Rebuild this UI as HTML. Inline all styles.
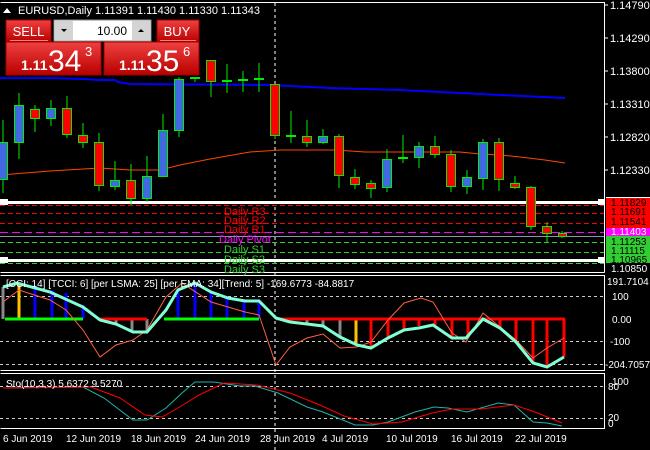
<!DOCTYPE html>
<html><head><meta charset="utf-8"><style>
html,body{margin:0;padding:0;background:#000;width:650px;height:450px;overflow:hidden}
svg{display:block;font-family:"Liberation Sans",sans-serif}
</style></head><body>
<svg width="650" height="450" viewBox="0 0 650 450" xmlns="http://www.w3.org/2000/svg">
<defs>
<linearGradient id="rg" x1="0" y1="0" x2="0" y2="1"><stop offset="0" stop-color="#f04040"/><stop offset="1" stop-color="#b80000"/></linearGradient>
</defs>
<rect width="650" height="450" fill="#000"/>
<!-- windows -->
<g fill="none" stroke="#fff" stroke-width="1">
<path d="M0.5 2.5H604.5V272.5"/>
<path d="M0.5 272.5H604.5M0.5 275.5H604.5V370.5H0.5"/>
<path d="M0.5 373.5H604.5V428.5H0.5"/>
</g>
<!-- main scale -->
<g fill="#fff" font-size="11">
<text x="610" y="9">1.14790</text><text x="610" y="42">1.14290</text><text x="610" y="75">1.13800</text>
<text x="610" y="108">1.13310</text><text x="610" y="141">1.12820</text><text x="610" y="174">1.12330</text>
</g>
<g stroke="#fff"><path d="M604 5h4M604 38h4M604 71h4M604 104h4M604 137h4M604 170h4"/></g>
<!-- MAs -->
<polyline fill="none" stroke="#0000ff" stroke-width="2" points="0,78 50,78 83,79 100,80 115,80 118,82 130,84 270,85 330,88 400,90 480,94 565,98"/>
<polyline fill="none" stroke="#ff4500" stroke-width="1" points="0,175 50,171 100,168 130,170 160,170 180,165 210,159 250,152 280,150 335,150 365,152 460,152 480,154 500,155 520,157 545,160 565,163"/>
<!-- vertical dashed -->
<path d="M275 3V450" stroke="#fff" stroke-dasharray="3,3"/>
<!-- levels -->
<rect x="0" y="201" width="604" height="3" fill="#fff"/>
<rect x="0" y="259" width="604" height="3" fill="#fff"/>
<g stroke-width="1">
<path d="M0 205.5H604" stroke="#ff0000" stroke-dasharray="5,3"/>
<path d="M0 213.5H604" stroke="#ff0000" stroke-dasharray="5,3"/>
<path d="M0 223.5H604" stroke="#ff0000" stroke-dasharray="5,3"/>
<path d="M0 232.5H604" stroke="#ff00ff" stroke-dasharray="8,4"/>
<path d="M0 236.5H604" stroke="#8899aa"/>
<path d="M0 242.5H604" stroke="#32cd32" stroke-dasharray="5,3"/>
<path d="M0 252.5H604" stroke="#32cd32" stroke-dasharray="5,3"/>
<path d="M0 263.5H604" stroke="#32cd32" stroke-dasharray="5,3"/>
</g>
<g font-size="11">
<text x="224" y="215" fill="#ff0000">Daily R3</text>
<text x="224" y="224" fill="#ff0000">Daily R2</text>
<text x="224" y="233" fill="#ff0000">Daily R1</text>
<text x="219" y="243" fill="#ff00ff">Daily Pivot</text>
<text x="224" y="253" fill="#32cd32">Daily S1</text>
<text x="224" y="263" fill="#32cd32">Daily S2</text>
<text x="224" y="273" fill="#32cd32">Daily S3</text>
</g>
<!-- right labels -->
<rect x="606" y="197" width="44" height="31" fill="#ff0000"/>
<rect x="606" y="228" width="44" height="8" fill="#ff00ff"/>
<rect x="606" y="236" width="44" height="27" fill="#32cd32"/>
<rect x="606" y="197" width="44" height="1" fill="#fff"/>
<g font-size="10" fill="#000">
<text x="611" y="206">1.11829</text><text x="611" y="215">1.11691</text><text x="611" y="225">1.11541</text>
<text x="611" y="235" fill="#fff">1.11403</text>
<text x="611" y="245">1.11253</text><text x="611" y="254">1.11115</text><text x="611" y="263">1.10965</text>
</g>
<text x="611" y="272" font-size="10" fill="#fff">1.10850</text>
<g fill="#fff"><rect x="598" y="199" width="7" height="6"/><rect x="598" y="257" width="7" height="6"/><rect x="0" y="199" width="8" height="6"/><rect x="0" y="257" width="8" height="6"/></g>
<!-- candles -->
<g stroke="#00ee00" stroke-width="1">
<path d="M3 120V193M19 93V159M35 105V132M51 100V126M67 96V138M83 123V148M99 133V191M115 161V190M131 164V205M147 156V202M163 114V176M179 77V137M195 78V82M211 60V97M227 64V93M243 71V92M259 63V92M275 84V139M291 111V143M307 120V147M323 129V144M339 134V188M355 169V189M371 180V198M387 149V192M403 135V163M419 142V168M435 136V158M451 150V192M467 170V194M483 139V190M499 138V191M515 176V189M531 186V230M547 222V243M562 231V238"/>
</g>
<g stroke="#00ee00" stroke-width="1">
<rect x="-1.5" y="142.5" width="9" height="37" fill="#4169e1"/>
<rect x="14.5" y="105.5" width="9" height="37" fill="#4169e1"/>
<rect x="30.5" y="109.5" width="9" height="9" fill="#f00"/>
<rect x="46.5" y="108.5" width="9" height="10" fill="#4169e1"/>
<rect x="62.5" y="108.5" width="9" height="26" fill="#f00"/>
<rect x="78.5" y="135.5" width="9" height="7" fill="#f00"/>
<rect x="94.5" y="142.5" width="9" height="43" fill="#f00"/>
<rect x="110.5" y="180.5" width="9" height="6" fill="#4169e1"/>
<rect x="126.5" y="180.5" width="9" height="18" fill="#f00"/>
<rect x="142.5" y="176.5" width="9" height="22" fill="#4169e1"/>
<rect x="158.5" y="130.5" width="9" height="46" fill="#4169e1"/>
<rect x="174.5" y="79.5" width="9" height="51" fill="#4169e1"/>
<rect x="206.5" y="60.5" width="9" height="21" fill="#f00"/>
<rect x="270.5" y="84.5" width="9" height="51" fill="#f00"/>
<rect x="302.5" y="136.5" width="9" height="6" fill="#f00"/>
<rect x="318.5" y="136.5" width="9" height="6" fill="#4169e1"/>
<rect x="334.5" y="136.5" width="9" height="39" fill="#f00"/>
<rect x="350.5" y="177.5" width="9" height="7" fill="#f00"/>
<rect x="366.5" y="183.5" width="9" height="5" fill="#f00"/>
<rect x="382.5" y="159.5" width="9" height="28" fill="#4169e1"/>
<rect x="414.5" y="146.5" width="9" height="11" fill="#4169e1"/>
<rect x="430.5" y="146.5" width="9" height="8" fill="#f00"/>
<rect x="446.5" y="154.5" width="9" height="32" fill="#f00"/>
<rect x="462.5" y="177.5" width="9" height="9" fill="#4169e1"/>
<rect x="478.5" y="142.5" width="9" height="36" fill="#4169e1"/>
<rect x="494.5" y="142.5" width="9" height="37" fill="#f00"/>
<rect x="510.5" y="183.5" width="9" height="4" fill="#f00"/>
<rect x="526.5" y="187.5" width="9" height="39" fill="#f00"/>
<rect x="542.5" y="226.5" width="9" height="7" fill="#f00"/>
<rect x="558.5" y="233.5" width="8" height="3" fill="#f00"/>
</g>
<g fill="#00ee00"><rect x="190" y="77" width="10" height="2"/><rect x="222" y="80" width="10" height="2"/><rect x="238" y="79" width="10" height="2"/><rect x="254" y="78" width="10" height="2"/><rect x="286" y="135" width="10" height="2"/><rect x="398" y="157" width="10" height="2"/></g>
<!-- header -->
<path d="M3 13L7 8L11 13Z" fill="#fff"/>
<text x="18" y="14" font-size="11" fill="#fff">EURUSD,Daily  1.11391 1.11430 1.11330 1.11343</text>
<!-- trade panel -->
<rect x="6" y="20" width="45" height="22" fill="url(#rg)" stroke="#a00000"/>
<text x="28.5" y="36" font-size="13" fill="#fff" text-anchor="middle">SELL</text>
<rect x="10" y="40" width="38" height="1" fill="#f08080"/>
<rect x="54" y="20" width="97" height="21" fill="#fff" stroke="#888"/>
<rect x="55" y="21" width="18" height="19" fill="#d4d4d4"/><rect x="132" y="21" width="18" height="19" fill="#d4d4d4"/>
<path d="M61 29h6l-3 3z" fill="#000"/><path d="M138 32h6l-3-3z" fill="#000"/>
<text x="127" y="35" font-size="12" fill="#000" text-anchor="end">10.00</text>
<rect x="157" y="20" width="42" height="22" fill="url(#rg)" stroke="#a00000"/>
<text x="177" y="36" font-size="13" fill="#fff" text-anchor="middle">BUY</text>
<rect x="160" y="40" width="36" height="1" fill="#f08080"/>
<rect x="6" y="42" width="95" height="33" fill="url(#rg)" stroke="#a00000"/>
<rect x="104" y="42" width="95" height="33" fill="url(#rg)" stroke="#a00000"/>
<g fill="#fff">
<text x="21" y="70" font-size="14" font-weight="bold">1.11</text>
<text x="48" y="71" font-size="30">34</text>
<text x="85" y="56" font-size="13">3</text>
<text x="119" y="70" font-size="14" font-weight="bold">1.11</text>
<text x="146" y="71" font-size="30">35</text>
<text x="183" y="56" font-size="13">6</text>
</g>
<!-- CCI window -->
<g stroke="#ccc" stroke-dasharray="3,3"><path d="M0 296.5H604M0 341.5H604M0 364.5H604"/></g>
<g stroke-width="3">
<path d="M3 319V287M116 319V324M132 319V332M147 319V332M290 319V322M307 319V324M323 319V326M340 319V337" stroke="#888"/>
<path d="M19 319V283M356 319V345" stroke="#ffc000"/>
<path d="M35 319V285M52 319V290M66 319V293M83 319V305M100 319V320M178 319V290M195 319V283M211 319V292M227 319V298M244 319V301M259 319V301" stroke="#0000ff"/>
<path d="M371 319V348M388 319V338M404 319V330M419 319V326M435 319V325M452 319V338M468 319V338M500 319V328M516 319V342M533 319V363M547 319V367M564 319V357" stroke="#ff0000"/>
<path d="M5 319H83M164 319H259" stroke="#00ff00"/>
<path d="M100 319H147M276 319H565" stroke="#ff0000"/>
</g>
<polyline fill="none" stroke="#ff6040" stroke-width="1" points="3,302 19,290 50,300 66,310 83,330 100,357 116,345 133,340 147,330 166,297 182,283 211,302 245,312 259,315 276,365 290,347 307,338 323,334 340,348 357,347 371,342 388,320 404,303 421,298 433,302 452,333 466,342 483,313 500,327 516,340 533,358 547,348 564,338"/>
<polyline fill="none" stroke="#7fffd4" stroke-width="3" points="3,287 17,283 50,292 83,307 100,320 116,324 133,332 147,332 166,310 178,290 195,283 211,292 228,298 245,301 259,301 276,318 290,322 307,324 323,326 340,337 357,345 371,348 388,338 404,330 419,328 433,325 452,338 466,338 483,319 500,328 516,342 533,363 547,367 564,357"/>
<text x="6" y="287" font-size="10" fill="#fff">[CCI: 14] [TCCI: 6] [per LSMA: 25] [per EMA: 34][Trend: 5]  -169.6773 -84.8817</text>
<g fill="#fff" font-size="10">
<text x="607" y="285">191.7104</text><text x="612" y="300">100</text><text x="612" y="323">0.00</text><text x="610" y="345">-100</text><text x="605" y="368">-204.7057</text>
</g>
<!-- Stoch -->
<g stroke="#ccc" stroke-dasharray="3,3"><path d="M0 386.5H604M0 418.5H604"/></g>
<polyline fill="none" stroke="#20b2aa" stroke-width="1" points="3,388 83,387 104,398 133,420 147,420 166,408 182,393 195,382 214,382 240,386 255,386 278,393 307,407 323,412 355,425 373,425 388,422 415,412 434,407 448,408 467,412 498,403 514,405 533,422 547,423 562,426"/>
<polyline fill="none" stroke="#ff0000" stroke-width="1" points="3,388 91,387 120,398 145,415 162,417 178,408 199,395 224,383 257,385 290,393 320,405 344,416 373,424 402,422 432,413 452,409 481,409 514,405 535,412 562,423"/>
<text x="6" y="387" font-size="10" fill="#fff">Sto(10,3,3) 5.6372 9.5270</text>
<g fill="#fff" font-size="10">
<text x="612" y="385">100</text><text x="608" y="390">80</text><text x="608" y="421">20</text><text x="608" y="427">0</text>
</g>
<!-- dates -->
<g fill="#fff" font-size="10">
<text x="3" y="442">6 Jun 2019</text><text x="66" y="442">12 Jun 2019</text><text x="131" y="442">18 Jun 2019</text>
<text x="195" y="442">24 Jun 2019</text><text x="260" y="442">28 Jun 2019</text><text x="322" y="442">4 Jul 2019</text>
<text x="386" y="442">10 Jul 2019</text><text x="451" y="442">16 Jul 2019</text><text x="515" y="442">22 Jul 2019</text>
</g>
</svg>
</body></html>
